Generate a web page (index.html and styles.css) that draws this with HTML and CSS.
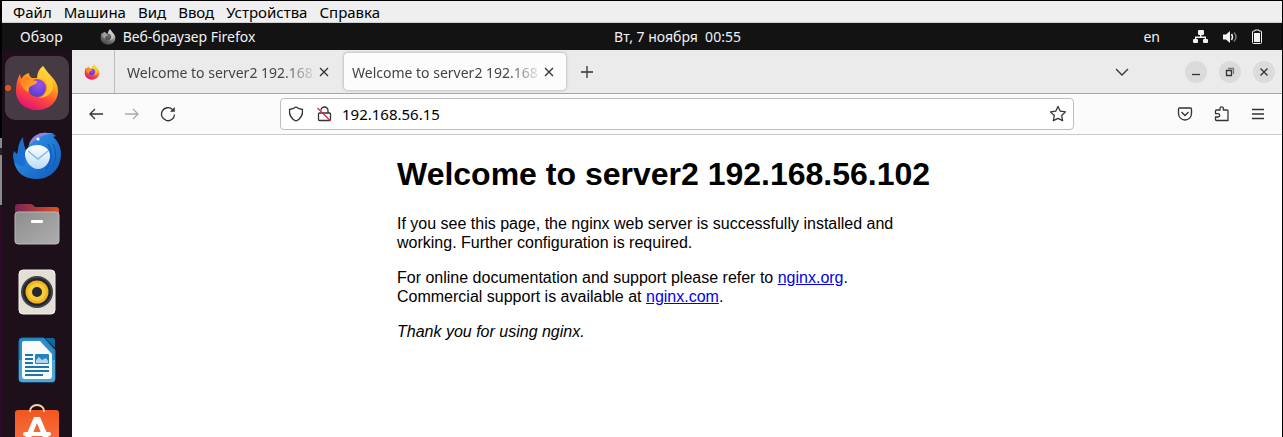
FILE: index.html
```html
<!DOCTYPE html>
<html lang="ru">
<head>
<meta charset="utf-8">
<title>Welcome to server2 192.168.56.102</title>
<link rel="stylesheet" href="styles.css">
</head>
<body>
<svg class="defs" width="0" height="0" aria-hidden="true">
  <defs>
    <linearGradient id="fox" x1=".8" y1="0" x2=".3" y2="1"><stop offset="0" stop-color="#fff44f"/><stop offset=".35" stop-color="#ffa41c"/><stop offset=".65" stop-color="#ff4a3a"/><stop offset="1" stop-color="#e2107a"/></linearGradient>
    <linearGradient id="foxhead" x1="0" y1="0" x2="1" y2="1"><stop offset="0" stop-color="#ff7a1c"/><stop offset="1" stop-color="#ffb52b"/></linearGradient>
    <radialGradient id="globe" cx=".6" cy=".3" r=".8"><stop offset="0" stop-color="#a04df0"/><stop offset="1" stop-color="#4a3fc4"/></radialGradient>
    <linearGradient id="bird" x1="0" y1="0" x2="1" y2="1"><stop offset="0" stop-color="#2fa0f5"/><stop offset="1" stop-color="#1257b8"/></linearGradient>
    <linearGradient id="mail" x1="0" y1="0" x2="0" y2="1"><stop offset="0" stop-color="#ffffff"/><stop offset="1" stop-color="#b9ddf8"/></linearGradient>
    <linearGradient id="tab" x1="0" y1="0" x2="1" y2="0"><stop offset="0" stop-color="#7a2456"/><stop offset="1" stop-color="#e0521f"/></linearGradient>
    <linearGradient id="folder" x1="0" y1="0" x2="1" y2="1"><stop offset="0" stop-color="#8d8d8d"/><stop offset="1" stop-color="#aeaeae"/></linearGradient>
    <linearGradient id="bag" x1="0" y1="0" x2="0" y2="1"><stop offset="0" stop-color="#f2571f"/><stop offset="1" stop-color="#f9784a"/></linearGradient>
    <symbol id="firefox" viewBox="0 0 44 46">
      <path d="M28 1c3 4 6 8 9 11 4 4 6 9 6 14 0 11-9 19-21 19S1 37 1 26c0-6 1-12 4-17l1 5c2-3 4-5 8-6 0 2 1 4 3 5h5c0-5 2-9 6-12z" fill="url(#fox)"/>
      <circle cx="22" cy="23" r="9" fill="url(#globe)"/>
      <path d="M5 15c4-3 9-3 12 0l5 1c1 2-3 4-6 5-2 1-3 3-2 6-5-1-8-6-9-12z" fill="url(#foxhead)"/>
      <path d="M22 14c5-1 10 2 10 8 0 5-4 10-9 11 8 0 15-4 15-12 0-8-6-12-10-17-3 2-5 6-6 10z" fill="#ffd232" opacity=".75"/>
    </symbol>
  </defs>
</svg>
<div class="vm">
  <nav class="menubar" aria-label="Меню">
    <button>Файл</button><button>Машина</button><button>Вид</button><button>Ввод</button><button>Устройства</button><button>Справка</button>
  </nav>
  <header class="topbar">
    <div class="top-left">
      <button>Обзор</button>
      <button class="app-menu"><svg class="gray" width="16" height="16"><use href="#firefox"/></svg>Веб-браузер Firefox</button>
    </div>
    <button class="clock">Вт, 7 ноября&nbsp; 00:55</button>
    <div class="top-right">
      <button>en</button>
      <svg width="16" height="16" viewBox="0 0 16 16" fill="#f2f2f2"><rect x="5" y="1" width="6" height="5" rx="1"/><rect x="0" y="10" width="5" height="4" rx="1"/><rect x="10" y="10" width="5" height="4" rx="1"/><path d="M7 5h1.500v2.500H13V11h-1.300V9H3.300v2H2V7.500h5z"/></svg>
      <svg width="16" height="16" viewBox="0 0 16 16" fill="none"><path d="M1 5.500h3L8 2v12L4 10.500H1z" fill="#f2f2f2"/><path d="M9.500 5q2 3 0 6" stroke="#f2f2f2" stroke-width="1.500"/><path d="M12 3.500q4 4.500 0 9" stroke="#777" stroke-width="1.500"/></svg>
      <svg width="12" height="16" viewBox="0 0 12 16"><path d="M4 1h4v1h1.500q1 0 1 1v10.500q0 1-1 1h-7q-1 0-1-1V3q0-1 1-1H4z" fill="none" stroke="#f2f2f2"/><path d="M3 4h6v9H3z" fill="#f2f2f2"/></svg>
    </div>
  </header>
  <div class="desktop">
    <aside class="dock">
      <button class="tile active" aria-label="Firefox"><svg width="44" height="46"><use href="#firefox"/></svg></button>
      <button class="tile" aria-label="Thunderbird"><svg width="50" height="48" viewBox="0 0 50 48">
        <path d="M1 23c0 4 1 8 4 12l8 2 3-14C13 17 11 11 11 5 8 9 6 13 6 18l-1 4-3-3z" fill="#1a6fd0"/>
        <path d="M17 13C19 5 27 0 35 1c4 0 7 1 9 3l-3 1c5 4 8 10 8 17 0 14-10 25-24 25C13 47 5 42 2 30c4 3 8 5 11 4 0-8 1-15 4-21z" fill="url(#bird)"/>
        <path d="M17 13C19 5 27 0 35 1c3 0 5 0 7 1-8 0-13 2-17 5-3 2-5 4-8 6z" fill="#8d83e6"/>
        <circle cx="26" cy="7" r="1.600" fill="#fff"/>
        <path d="M36 12c5 8 4 17-2 26M41 12c4 8 3 16-1 23" fill="none" stroke="#0e58b8"/>
        <path d="M13 22c0-6 6-9 13-9s12 5 12 11-5 13-12 13-13-8-13-15z" fill="url(#mail)"/><path d="M16 19l10 8 10-8" fill="none" stroke="#84b8e8" stroke-width="1.500"/>
      </svg></button>
      <button class="tile" aria-label="Файлы"><svg width="46" height="42" viewBox="0 0 46 42"><path d="M1 10V4q0-3 3-3h12q2 0 3 1l2 2h21q3 0 3 3v8H1z" fill="url(#tab)"/><rect x="1" y="9" width="44" height="32" rx="3" fill="url(#folder)" stroke="#b8b8b8"/><rect x="17" y="17" width="12" height="3" rx="1" fill="#fff"/></svg></button>
      <button class="tile" aria-label="Rhythmbox"><svg width="38" height="46" viewBox="0 0 38 46"><rect x="1" y="1" width="36" height="44" rx="4" fill="#e3dfd6" stroke="#f4f1eb"/><circle cx="19" cy="23" r="16" fill="#40444b"/><circle cx="19" cy="23" r="14" fill="#22242a"/><circle cx="19" cy="23" r="11.500" fill="#f0b41c"/><circle cx="19" cy="23" r="9" fill="#f4cc3c"/><circle cx="19" cy="23" r="5" fill="#26282d"/></svg></button>
      <button class="tile" aria-label="LibreOffice Writer"><svg width="38" height="46" viewBox="0 0 38 46"><path d="M4 1h22l11 12v29q0 3-3 3H4q-3 0-3-3V4q0-3 3-3z" fill="#2b8cc9" stroke="#1973ae"/><path d="M1 23h36v19q0 3-3 3H4q-3 0-3-3z" fill="#48a7d9"/><path d="M6 4h16l12 13v22q0 3-3 3H7q-3 0-3-3V6q0-2 2-2z" fill="#fafafa"/><path d="M27 1h8q2 0 2 2v8z" fill="#176699"/><path d="M7 18h8M7 22h8M7 26h8M7 30h24M7 34h24M7 38h18" stroke="#1976ae" stroke-width="2"/><rect x="17" y="17" width="14" height="10" rx="1" fill="#2582bd"/><path d="M18 26v-3l3-3 3 3 4-2 2 3v2z" fill="#a8d8f0"/></svg></button>
      <button class="tile" aria-label="Ubuntu Software"><svg width="46" height="50" viewBox="0 0 46 50"><rect x="1" y="7" width="44" height="42" rx="3" fill="url(#bag)"/><path d="M16 9V8a7 6 0 0 1 14 0v1" fill="none" stroke="#f1d5b0" stroke-width="2"/><path d="M20 14h6l12 28h-6l-9-22-9 22H8z" fill="#fff"/><rect x="9" y="29" width="28" height="4" rx="2" fill="#fff"/></svg></button>
    </aside>
    <main class="browser">
      <div class="tabs">
        <button class="pinned" aria-label="Firefox View"><svg width="16" height="16"><use href="#firefox"/></svg></button>
        <div class="tab"><span class="title">Welcome to server2 192.168</span><button aria-label="Закрыть вкладку"><svg width="10" height="10" viewBox="0 0 10 10"><path d="M1 1l8 8M9 1L1 9"/></svg></button></div>
        <div class="tab current"><span class="title">Welcome to server2 192.168</span><button aria-label="Закрыть вкладку"><svg width="10" height="10" viewBox="0 0 10 10"><path d="M1 1l8 8M9 1L1 9"/></svg></button></div>
        <button class="new" aria-label="Новая вкладка"><svg width="14" height="14" viewBox="0 0 14 14"><path d="M7 1v12M1 7h12"/></svg></button>
        <button class="all" aria-label="Список вкладок"><svg width="14" height="14" viewBox="0 0 14 14"><path d="M1 4l6 6 6-6"/></svg></button>
        <div class="window">
          <button aria-label="Свернуть"><svg width="10" height="10" viewBox="0 0 10 10"><path d="M1 7.500h8"/></svg></button>
          <button aria-label="Восстановить"><svg width="10" height="10" viewBox="0 0 10 10"><path d="M1.500 3.500h5v5h-5z"/><path d="M3 1.500h5.500V7" opacity=".6"/></svg></button>
          <button aria-label="Закрыть"><svg width="10" height="10" viewBox="0 0 10 10"><path d="M1.500 1.500l7 7M8.500 1.500l-7 7"/></svg></button>
        </div>
      </div>
      <div class="toolbar">
        <div class="nav">
          <button aria-label="Назад"><svg width="16" height="16" viewBox="0 0 16 16"><path d="M15 8H2M7 3L2 8l5 5"/></svg></button>
          <button class="off" aria-label="Вперёд"><svg width="16" height="16" viewBox="0 0 16 16"><path d="M1 8h13M9 3l5 5-5 5"/></svg></button>
          <button aria-label="Обновить"><svg width="16" height="16" viewBox="0 0 16 16"><path d="M12.500 3.500A6.500 6.500 0 1 0 14.500 8.500"/><path d="M14.500 1.500v4h-4z" fill="#333" stroke-width=".5"/></svg></button>
        </div>
        <form class="address">
          <svg width="16" height="16" viewBox="0 0 16 16"><path d="M8 1q3 2 6.500 2.500C15 9 12.500 13 8 15 3.500 13 1 9 1.500 3.500 5 3 8 1 8 1z"/></svg>
          <svg width="16" height="16" viewBox="0 0 16 16"><path d="M5 4.500a3.500 3.500 0 0 1 7 0V7M3.500 7h10q1 0 1 1v5.500q0 1-1 1h-10q-1 0-1-1V8q0-1 1-1z"/><path d="M1.500 2l13 13" stroke="#e2204e"/></svg>
          <input type="text" value="192.168.56.15" aria-label="Адрес">
          <button type="button" aria-label="Добавить закладку"><svg width="18" height="18" viewBox="0 0 18 18"><path d="M9 1.500l2.300 4.700 5.200.700-3.800 3.600.900 5.200L9 13.300l-4.600 2.400.900-5.200L1.500 6.900l5.200-.700z" stroke-linejoin="round"/></svg></button>
        </form>
        <div class="tools">
          <button aria-label="Pocket"><svg width="16" height="16" viewBox="0 0 16 16"><path d="M2.500 2h11q1 0 1 1v4.500a6.500 6.500 0 0 1-13 0V3q0-1 1-1z"/><path d="M4.500 6L8 9.500 11.500 6"/></svg></button>
          <button aria-label="Расширения"><svg width="16" height="16" viewBox="0 0 16 16"><path d="M1.500 5q0-1 1-1H6V2.500a1.700 1.700 0 0 1 3.400 0V4H13q1 0 1 1v9.500H2.500q-1 0-1-1V11H4a1.700 1.700 0 0 0 0-3.400H1.500z" stroke-linejoin="round"/></svg></button>
          <button aria-label="Меню"><svg width="14" height="16" viewBox="0 0 14 16"><path d="M1 3.500h12M1 8h12M1 12.500h12"/></svg></button>
        </div>
      </div>
      <article class="page">
        <h1>Welcome to server2 192.168.56.102</h1>
        <p>If you see this page, the nginx web server is successfully installed and working. Further configuration is required.</p>
        <p>For online documentation and support please refer to <a href="http://nginx.org/">nginx.org</a>.<br>Commercial support is available at <a href="http://nginx.com/">nginx.com</a>.</p>
        <p><em>Thank you for using nginx.</em></p>
      </article>
    </main>
  </div>
</div>
</body>
</html>
```
FILE: styles.css
```css
* { box-sizing: border-box; }
body { margin: 0; font: 14px/20px "Noto Sans", sans-serif; color: #15141a; background: #000; }
button { border: 0; padding: 0; margin: 0; background: none; color: inherit; font: inherit; }
svg { display: block; flex: none; }
.defs { position: absolute; }
.vm { height: 100vh; display: flex; flex-direction: column; overflow: hidden; padding: 1px 1px 0 2px; background: linear-gradient(#000 138px, #8a8a8a 138px 148px, #222 148px 155px, #8a8a8a 155px 205px, #2e0a28 205px) left / 2px 100% no-repeat; }
.menubar { height: 22px; flex: none; display: flex; align-items: center; gap: 12px; padding-left: 11px; background: #efefef; border-bottom: 1px solid #d0d0d0; color: #000; font-size: 15px; }
.topbar { height: 27px; flex: none; display: grid; grid-template-columns: 1fr auto 1fr; align-items: center; background: #131313; color: #f2f2f2; padding: 0 19px 0 18px; }
.top-left, .top-right { display: flex; align-items: center; }
.top-left { gap: 37px; }
.top-right { justify-content: flex-end; gap: 13px; }
.top-right button { margin-right: 20px; }
.clock { margin-left: 72px; }
.app-menu { display: flex; align-items: center; gap: 7px; }
.gray { filter: grayscale(1); }
.desktop { flex: 1; min-height: 0; display: flex; }
.dock { width: 70px; flex: none; display: flex; flex-direction: column; align-items: center; gap: 4px; padding-top: 6px; overflow: hidden; background: #1e101a; }
.tile { position: relative; width: 64px; height: 64px; flex: none; display: grid; place-items: center; border-radius: 10px; }
.active { background: #463b43; }
.active::before { content: ""; position: absolute; left: 0; top: 29px; width: 6px; height: 6px; border-radius: 50%; background: #e95420; }
.browser { flex: 1; min-width: 0; background: #fff; }
.browser svg { fill: none; stroke: #333; stroke-width: 1.3px; }
.browser .pinned svg { stroke: none; }
.tabs { height: 44px; display: flex; align-items: center; padding-right: 7px; background: #ebebeb; border-bottom: 1px solid #a6a6a6; color: #444; }
.pinned { width: 43px; height: 43px; display: grid; place-items: center; border-right: 1px solid #bcbcbc; padding-right: 2px; }
.tab { width: 222px; height: 37px; display: flex; align-items: center; gap: 1px; padding: 0 12px 0 8px; border-radius: 4px; }
.pinned + .tab { margin: 0 3px 0 4px; }
.current { background: #fcfcfc; box-shadow: 0 0 3px #999; }
.title { flex: 1; min-width: 0; padding-top: 2px; white-space: nowrap; overflow: hidden; mask-image: linear-gradient(to right, #000 calc(100% - 36px), transparent); }
.new { margin-left: 14px; }
.all { margin-left: auto; }
.window { display: flex; gap: 12px; margin-left: 56px; }
.window button { width: 22px; height: 22px; display: grid; place-items: center; border-radius: 50%; background: #dbdbdb; }
.toolbar { height: 41px; display: grid; grid-template-columns: 208px minmax(0, 794px) 1fr; align-items: center; background: #fbfbfb; border-bottom: 1px solid #ccc; }
.nav { display: flex; gap: 20px; padding-left: 16px; }
.off { opacity: .4; }
.address { height: 32px; display: flex; align-items: center; gap: 12px; padding: 0 6px 0 7px; background: #fff; border: 1px solid #bebebe; border-radius: 4px; }
.address input { flex: 1; min-width: 0; border: 0; padding: 0; margin-left: -2px; outline: 0; background: none; font: inherit; font-size: 15px; color: #000; }
.tools { display: flex; justify-content: flex-end; gap: 21px; padding-right: 17px; }
.page { max-width: 560px; margin: 0 auto; padding-top: 21px; font: 16px/19px "Liberation Sans", Arial, sans-serif; color: #000; }
h1 { margin: 0 0 21px; font-size: 32px; line-height: 37px; white-space: nowrap; }
p { margin: 0 0 16px; }
a { color: #00e; }
```
